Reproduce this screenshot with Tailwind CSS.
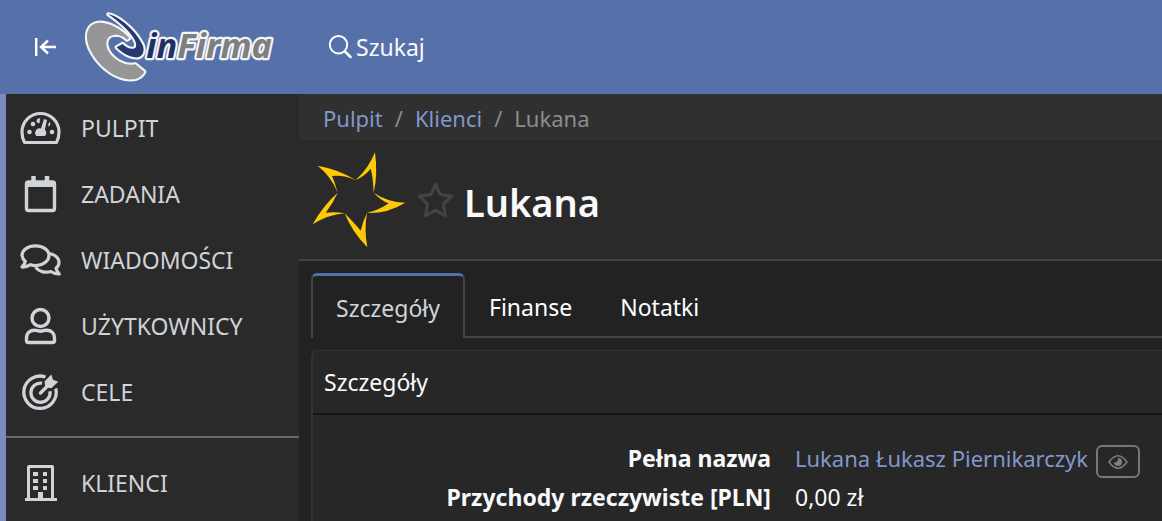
<!DOCTYPE html>
<html lang="pl">
<head>
<meta charset="utf-8">
<meta name="viewport" content="width=device-width, initial-scale=1">
<title>inFirma – Lukana</title>
<script src="https://cdn.jsdelivr.net/npm/@tailwindcss/browser@4"></script>
</head>
<body class="flex min-h-screen flex-col overflow-x-hidden bg-[#222] font-['Segoe_UI','Noto_Sans',sans-serif] text-[23px] leading-9 text-[#f8f9fa]">
<header class="flex h-[94px] shrink-0 items-center bg-[#5671aa]">
  <button type="button" aria-label="Zwiń menu" class="ml-[34px] h-6 w-6">
    <svg viewBox="0 0 24 24" class="h-6 w-6 fill-none stroke-white stroke-[2.4]"><path d="M2.200 3v18M22 12H7M14 5.500 7 12l7 6.500"/></svg>
  </button>
  <a href="#" aria-label="inFirma" class="ml-[22px]">
    <svg viewBox="240 26 600 228" class="h-[76px] w-[200px]">
      <g stroke="#f4f5f8" stroke-width="13" stroke-linejoin="round" paint-order="stroke">
        <path fill="#969696" d="M388 113C362 84 320 62 290 68C256 76 253 118 276 158C302 204 352 240 397 237C414 236 428 226 433 214L406 192C382 198 344 184 325 152C312 126 320 104 346 103C361 103 374 110 381 118Z"/>
        <path fill="#273a70" d="M325 42C346 43 402 82 427 132C436 152 428 168 414 171C390 173 366 157 350 141L368 131C380 144 400 151 408 140C416 116 366 70 325 42Z"/>
        <text x="439" y="174" font-family="Noto Sans, sans-serif" font-size="103" font-weight="700" font-style="italic" fill="#1f3067">in<tspan fill="#7f7f7f">Firma</tspan></text>
      </g>
    </svg>
  </a>
  <button type="button" class="ml-12 flex items-center gap-1">
    <svg viewBox="0 0 24 24" class="h-6 w-6 fill-none stroke-white stroke-2"><circle cx="10.500" cy="9.700" r="8.700"/><path stroke-linecap="round" stroke-width="2.500" d="m17 16.500 5.500 5.500"/></svg>
    Szukaj
  </button>
</header>
<div class="flex flex-1">
  <nav class="w-[299px] shrink-0 border-l-6 border-[#7a8cbd] bg-[#2a2a2a] pt-px text-[#d0d3d8]">
    <a href="#" class="flex h-[66px] items-center gap-[19px] pl-3.5">
      <svg viewBox="0 0 42 42" class="h-[42px] w-[42px] fill-none stroke-current stroke-[3.2]"><path stroke-linejoin="round" d="M4.500 35.500C2.500 32 2 29 2 25a18.500 18.500 0 0 1 37 0c0 4-.5 7-2.500 10.500Z"/><g fill="currentColor" stroke="none"><circle cx="9.500" cy="25" r="2.300"/><circle cx="32" cy="25" r="2.300"/><circle cx="13" cy="17" r="2.300"/><path d="M20.200 11.500 19.500 16q-.7.500-1.400 0a2.400 2.400 0 0 1 2.100-4.500ZM29.500 15a2.300 2.300 0 0 1-1.700 4.100l1.500-4Z"/><path d="m24 12 3 1-2.200 9.500a4.500 4.500 0 0 1 .2 6.500h-8.500a4.500 4.500 0 0 1 4.500-7.500Z"/></g></svg>
      PULPIT</a>
    <a href="#" class="flex h-[66px] items-center gap-[19px] pl-3.5">
      <svg viewBox="0 0 42 42" class="h-[42px] w-[42px] fill-none stroke-current stroke-[3.4]"><rect x="6.500" y="9" width="28" height="28.500" rx="2"/><path stroke-width="4.500" d="M13.500 3v7M27 3v7"/><path stroke-width="6" d="M7 11h27.500"/></svg>
      ZADANIA</a>
    <a href="#" class="flex h-[66px] items-center gap-[19px] pl-3.5">
      <svg viewBox="0 0 42 42" class="h-[42px] w-[42px] fill-none stroke-current stroke-[3.2]" stroke-linejoin="round"><path d="M2 28c2-2 3-3.500 3.300-5.500A10.500 10.500 0 0 1 2 16.500C2 11 8 6.800 15.500 6.800S29 11 29 16.500s-6 10-13.500 10c-1.800 0-3.500-.3-5-.8C8 27.300 5 28.300 2 28Z"/><path d="M30 14.500c5.200 1.500 9 4.700 9 9 0 2.200-1.200 4.300-3 5.800.3 2 1.500 3.800 3.300 5.700-3.300.2-6-.8-8.500-2.500-5.800 1.800-12.300 0-15.300-4.300"/></svg>
      WIADOMOŚCI</a>
    <a href="#" class="flex h-[66px] items-center gap-[19px] pl-3.5">
      <svg viewBox="0 0 42 42" class="h-[42px] w-[42px] fill-none stroke-current stroke-[3.4]"><circle cx="20.500" cy="13" r="8.500"/><path stroke-linejoin="round" d="M6.500 35.500v-2.500c0-5 3.500-7.800 8-7.800 2.500 0 3.500 1 6 1s3.500-1 6-1c4.500 0 8 2.800 8 7.800v2.500q0 2-2 2h-24q-2 0-2-2Z"/></svg>
      UŻYTKOWNICY</a>
    <a href="#" class="flex h-[66px] items-center gap-[19px] pl-3.5">
      <svg viewBox="0 0 42 42" class="h-[42px] w-[42px] fill-none stroke-current stroke-[3.3]"><path d="M25.500 6A16.200 16.200 0 1 0 35.800 17.500M22 12.200a9.600 9.600 0 1 0 8 8"/><path stroke-linecap="round" stroke-width="3.400" d="m20.500 22 7.500-7.500"/><path fill="currentColor" stroke="none" d="m24.500 10.500 6.800-7 1.700 5.200 5.300 2-7 6.500-5.800-1Z"/></svg>
      CELE</a>
    <hr class="mb-3 mt-[11px] border-t-2 border-[#696969]">
    <a href="#" class="flex h-[66px] items-center gap-[19px] pl-3.5">
      <svg viewBox="0 0 42 42" class="h-[42px] w-[42px] fill-current"><path fill-rule="evenodd" d="M7 5q0-2 2-2h23q2 0 2 2v31h3v3H5v-3h2ZM10 6v30h8v-6h5v6h8V6Z"/><path d="M13 10h5v4h-5zM23 10h4v4h-4zM13 17h5v4h-5zM23 17h4v4h-4zM13 24h5v4h-5zM23 24h4v4h-4zM18 30h5v7h-5z"/></svg>
      KLIENCI</a>
  </nav>
  <main class="min-w-0 flex-1">
    <nav aria-label="Ścieżka" class="flex h-[46px] items-center gap-3 bg-[#303030] pl-6 pt-0.5 text-[22px] text-[#8c8c8c]">
      <a href="#" class="text-[#8297cb]">Pulpit</a><span>/</span><a href="#" class="text-[#8297cb]">Klienci</a><span>/</span><span>Lukana</span>
    </nav>
    <div class="flex h-[121px] items-center border-b-2 border-[#444] bg-[#2a2a2a] pl-[11px]">
      <svg viewBox="30 30 300 300" class="h-[100px] w-[100px] fill-[#ffc907]"><path d="M225 37Q234 105 221 158Q219 110 212 86Q195 108 167 120Q204 88 225 37ZM316 188Q262 186 221 158Q243 182 266 190Q240 209 201 219Q262 221 316 188ZM202 322Q192 272 201 219Q189 242 182 272Q165 252 134 220Q156 276 202 322ZM38 253Q84 224 134 220Q106 214 77 218Q98 192 113 158Q69 197 38 253ZM53 77Q116 88 167 120Q130 104 96 108Q105 128 113 158Q95 111 53 77Z"/></svg>
      <button type="button" aria-label="Dodaj do ulubionych" class="ml-1.5"><svg viewBox="0 0 40 40" class="h-10 w-10 fill-none stroke-[#434343] stroke-[3.2]" stroke-linejoin="round"><path d="m19.500 4.500 4.700 10 11.500 1.700-8.300 8 2 11.500-9.900-5.400-10 5.400 2-11.500-8.200-8 11.500-1.700Z"/></svg></button>
      <h1 class="ml-2 pt-1 text-[38px] font-semibold leading-none">Lukana</h1>
    </div>
    <div role="tablist" class="mt-3 flex h-[65px]">
      <div class="w-3 shrink-0"></div>
      <button type="button" role="tab" aria-selected="true" class="rounded-t-md border-x-2 border-t-3 border-x-[#444] border-t-[#5671aa] px-[23px] pt-0.5 text-[#d0d3d8]">Szczegóły</button>
      <div class="flex flex-1 border-b-2 border-[#444] pt-1 text-white">
        <button type="button" role="tab" aria-selected="false" class="px-6">Finanse</button>
        <button type="button" role="tab" aria-selected="false" class="px-6">Notatki</button>
      </div>
    </div>
    <section class="ml-3 mt-3 rounded-tl-md border-l-2 border-t border-[#333] bg-[#272727]">
      <h2 class="border-b-2 border-[#151515] py-[13px] pl-[11px]">Szczegóły</h2>
      <dl class="grid grid-cols-[470px_1fr] pb-2 pt-6 leading-[39px]">
        <dt class="pr-3 text-right font-bold">Pełna nazwa</dt>
        <dd class="flex items-center gap-2 whitespace-nowrap pl-3"><a href="#" class="text-[22px] text-[#8297cb]">Lukana Łukasz Piernikarczyk</a>
          <button type="button" aria-label="Podgląd" class="mt-1.5 flex h-[33px] w-11 items-center justify-center rounded-md border-2 border-[#777]"><svg viewBox="0 0 20 14" class="h-[14px] w-5 fill-none stroke-[#7f7f7f] stroke-[1.500]"><path d="M1 7Q10-5.500 19 7Q10 19.500 1 7Z"/><path fill="#7f7f7f" stroke="none" d="M10 3a4 4 0 1 1-4 4q2.700 1 3.500-1T10 3Z"/></svg></button></dd>
        <dt class="pr-3 text-right font-bold">Przychody rzeczywiste [PLN]</dt>
        <dd class="pl-3">0,00 zł</dd>
      </dl>
    </section>
  </main>
</div>
</body>
</html>
